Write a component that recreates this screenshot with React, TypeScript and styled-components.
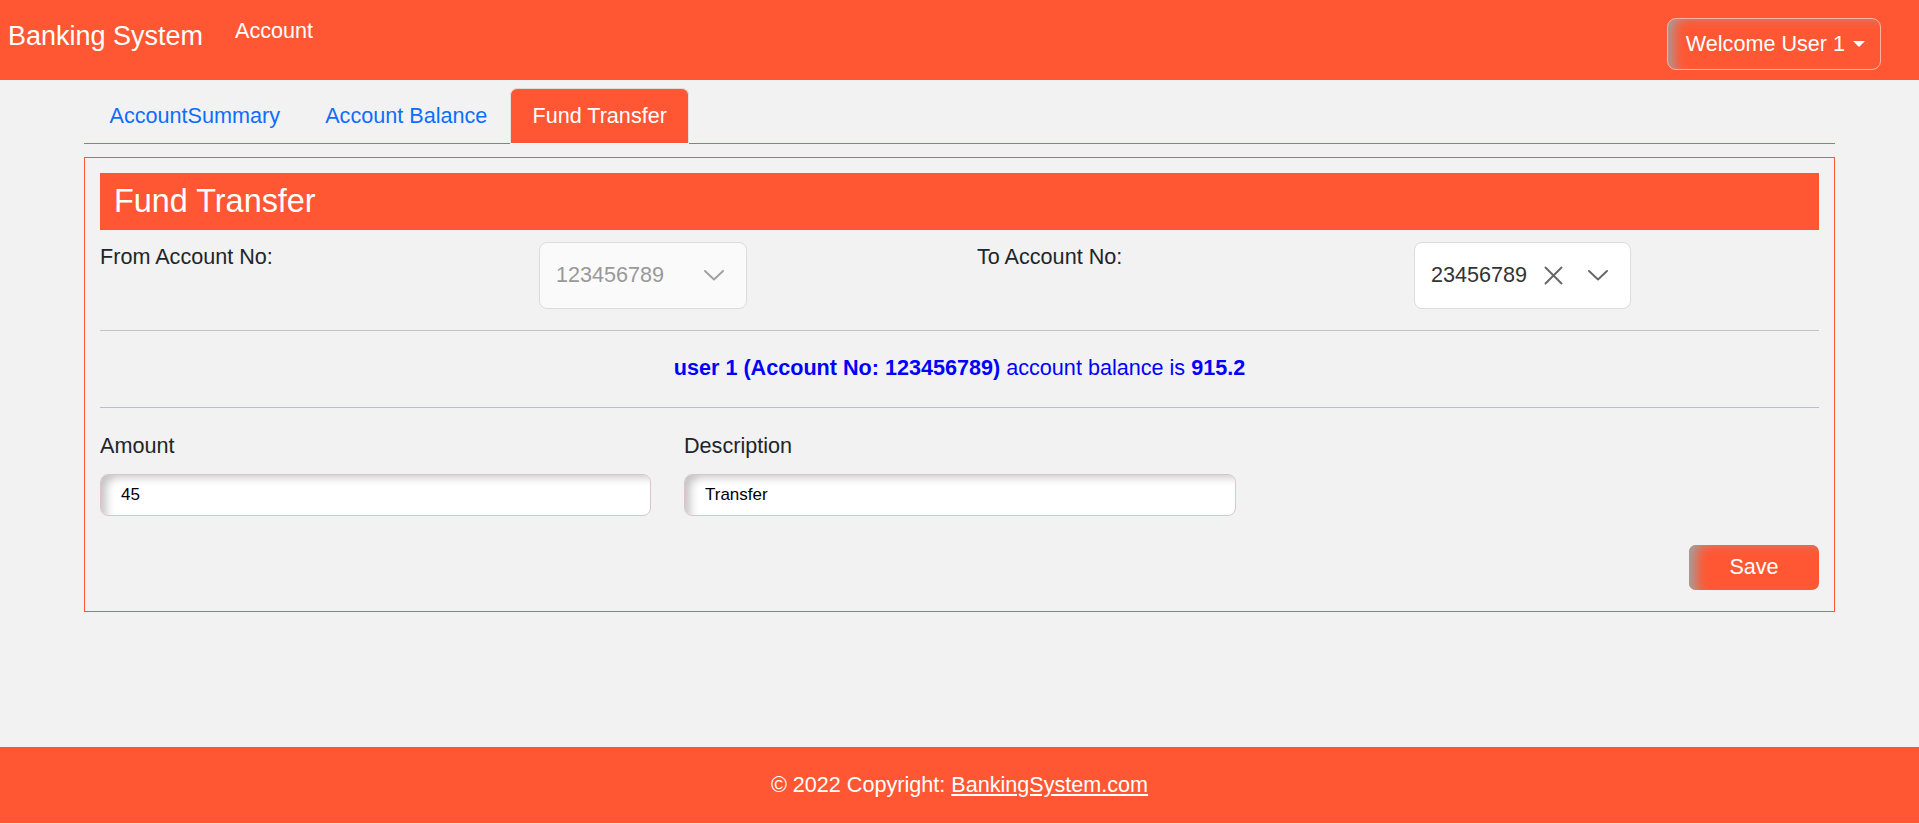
import styled, { createGlobalStyle } from "styled-components";

const colors = {
  brand: "#ff5733",
  pageBg: "#f2f2f2",
  text: "#212529",
  link: "#0d6efd",
  balance: "#0000ff",
};

const GlobalStyle = createGlobalStyle`
  * {
    box-sizing: border-box;
  }

  body {
    margin: 0;
    background: ${colors.pageBg};
    font-family: "Liberation Sans", Arial, sans-serif;
    font-size: 21.6px;
    line-height: 1.5;
    color: ${colors.text};
  }
`;

const ChevronIcon = ({ color }: { color: string }) => (
  <svg width="20" height="11" viewBox="0 0 20 11" fill="none">
    <polyline
      points="1,1 10,9.5 19,1"
      stroke={color}
      strokeWidth="1.9"
      strokeLinecap="round"
      strokeLinejoin="round"
    />
  </svg>
);

const ClearIcon = () => (
  <svg width="19" height="19" viewBox="0 0 19 19" fill="none">
    <path
      d="M1.5 1.5 L17.5 17.5 M17.5 1.5 L1.5 17.5"
      stroke="#666"
      strokeWidth="1.9"
      strokeLinecap="round"
    />
  </svg>
);

type Tab = { label: string; active?: boolean };

const tabs: Tab[] = [
  { label: "AccountSummary" },
  { label: "Account Balance" },
  { label: "Fund Transfer", active: true },
];

export default function App() {
  return (
    <Page>
      <GlobalStyle />
      <Header>
        <Brand>Banking System</Brand>
        <NavLink>Account</NavLink>
        <UserButton>
          Welcome User 1<Caret />
        </UserButton>
      </Header>

      <Container>
        <TabList>
          {tabs.map((t) => (
            <TabItem key={t.label} $active={t.active}>
              {t.label}
            </TabItem>
          ))}
        </TabList>

        <Card>
          <CardTitle>Fund Transfer</CardTitle>

          <AccountRow>
            <FieldLabel>From Account No:</FieldLabel>
            <SelectBox $disabled>
              <SelectValue $disabled>123456789</SelectValue>
              <Indicator $gap={40}>
                <ChevronIcon color="#a0a0a0" />
              </Indicator>
            </SelectBox>
            <FieldLabel>To Account No:</FieldLabel>
            <SelectBox>
              <SelectValue>23456789</SelectValue>
              <Indicator $gap={17}>
                <ClearIcon />
              </Indicator>
              <Indicator $gap={25}>
                <ChevronIcon color="#666" />
              </Indicator>
            </SelectBox>
          </AccountRow>

          <Divider $spaced />
          <BalanceLine>
            <strong>user 1 (Account No: 123456789)</strong> account balance is{" "}
            <strong>915.2</strong>
          </BalanceLine>
          <Divider $tint />

          <InputRow>
            <Field>
              <FieldLabel>Amount</FieldLabel>
              <TextInput defaultValue="45" />
            </Field>
            <Field>
              <FieldLabel>Description</FieldLabel>
              <TextInput defaultValue="Transfer" />
            </Field>
          </InputRow>

          <Actions>
            <SaveButton>Save</SaveButton>
          </Actions>
        </Card>
      </Container>

      <Footer>
        © 2022 Copyright:&nbsp;<FooterLink href="#">BankingSystem.com</FooterLink>
      </Footer>
    </Page>
  );
}

const Page = styled.div`
  min-height: 100vh;
  display: flex;
  flex-direction: column;
  padding-bottom: 1px;
`;

const Header = styled.header`
  height: 80px;
  display: flex;
  align-items: flex-start;
  padding: 0 38px 0 8px;
  background: ${colors.brand};
  color: #fff;
`;

const Brand = styled.div`
  margin-top: 16px;
  font-size: 27px;
  line-height: 40.5px;
`;

const NavLink = styled.div`
  margin: 15px 0 0 32px;
  font-size: 21.6px;
  line-height: 32.4px;
`;

const UserButton = styled.button`
  margin: 18px 0 0 auto;
  height: 52px;
  display: flex;
  align-items: center;
  padding: 0 15px 0 18px;
  border: 1px solid rgba(255, 255, 255, 0.55);
  border-radius: 9px;
  background: transparent;
  box-shadow: inset 10px 3px 12px -5px rgba(160, 160, 160, 1);
  color: #fff;
  font-family: inherit;
  font-size: 21.6px;
  line-height: 32.4px;
`;

const Caret = styled.span`
  margin-left: 8px;
  border-top: 6.5px solid #fff;
  border-left: 6.5px solid transparent;
  border-right: 6.5px solid transparent;
`;

const Container = styled.main`
  width: 1751px;
  margin: 8px auto 0;
`;

const TabList = styled.nav`
  display: flex;
  padding-left: 3px;
  border-bottom: 1px solid ${colors.brand};
`;

const TabItem = styled.div<{ $active?: boolean }>`
  margin-bottom: -1px;
  padding: 10.8px 21.6px;
  border: 1px solid transparent;
  border-radius: 7px 7px 0 0;
  line-height: 32.4px;
  color: ${colors.link};
  cursor: pointer;

  ${({ $active }) =>
    $active &&
    `
    background: ${colors.brand};
    color: #fff;
    border-color: #e4dcda #e4dcda #fff;
  `}
`;

const Card = styled.section`
  margin-top: 13px;
  padding: 15px 15px 21px;
  border: 1px solid ${colors.brand};
`;

const CardTitle = styled.h4`
  margin: 0;
  height: 57px;
  display: flex;
  align-items: center;
  padding: 0 14px;
  background: ${colors.brand};
  color: #fff;
  font-size: 32.4px;
  font-weight: 400;
`;

const AccountRow = styled.div`
  margin-top: 11px;
  display: grid;
  grid-template-columns: 439px 438px 437px 1fr;
  align-items: start;
`;

const FieldLabel = styled.label`
  display: block;
  line-height: 32.4px;
`;

const SelectBox = styled.div<{ $disabled?: boolean }>`
  justify-self: start;
  margin-top: 1px;
  height: 67px;
  display: inline-flex;
  align-items: center;
  padding: 0 22px 0 16px;
  border: 1px solid #dcdcdc;
  border-radius: 8px;
  background: ${({ $disabled }) => ($disabled ? "#fafafa" : "#fff")};
`;

const SelectValue = styled.span<{ $disabled?: boolean }>`
  color: ${({ $disabled }) => ($disabled ? "#999" : "#333")};
`;

const Indicator = styled.span<{ $gap: number }>`
  display: flex;
  margin-left: ${({ $gap }) => $gap}px;
`;

const Divider = styled.hr<{ $tint?: boolean; $spaced?: boolean }>`
  margin: ${({ $spaced }) => ($spaced ? "21px 0 0" : "0")};
  border: 0;
  border-top: 1px solid ${({ $tint }) => ($tint ? "#b8b8ee" : "#c3c3c4")};
`;

const BalanceLine = styled.p`
  margin: 0;
  padding: 21px 0 23px;
  text-align: center;
  line-height: 32.4px;
  color: ${colors.balance};
`;

const InputRow = styled.div`
  margin-top: 22px;
  display: grid;
  grid-template-columns: 551px 552px;
  column-gap: 33px;
`;

const Field = styled.div`
  display: flex;
  flex-direction: column;
  gap: 11px;
`;

const TextInput = styled.input`
  height: 42px;
  padding: 0 20px;
  border: 1px solid #dcc6c4;
  border-radius: 8px;
  background: #fff;
  box-shadow: inset 10px 7px 10px -5px rgba(0, 0, 0, 0.24);
  font-family: inherit;
  font-size: 17px;
  color: #000;
  outline: none;
`;

const Actions = styled.div`
  margin-top: 29px;
  display: flex;
  justify-content: flex-end;
`;

const SaveButton = styled.button`
  width: 130px;
  height: 45px;
  border: 0;
  border-radius: 7px;
  background: ${colors.brand};
  box-shadow: inset 12px 3px 12px -5px rgba(160, 160, 160, 1);
  color: #fff;
  font-family: inherit;
  font-size: 21.6px;
  cursor: pointer;
`;

const Footer = styled.footer`
  margin-top: auto;
  height: 76px;
  display: flex;
  align-items: center;
  justify-content: center;
  background: ${colors.brand};
  color: #fff;
  line-height: 32.4px;
`;

const FooterLink = styled.a`
  color: #fff;
  text-decoration: underline;
`;
